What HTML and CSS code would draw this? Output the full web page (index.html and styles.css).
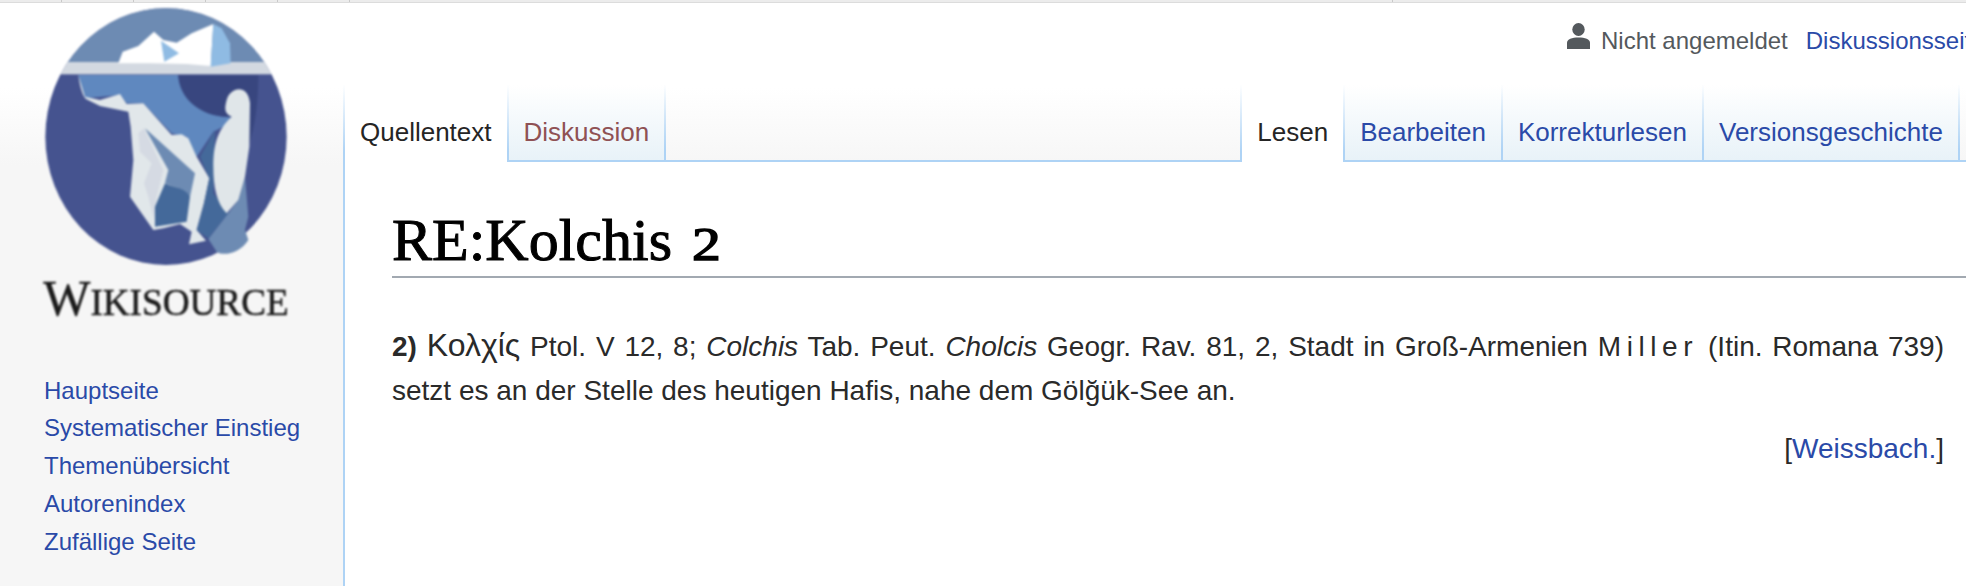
FILE: index.html
```html
<!DOCTYPE html>
<html lang="de">
<head>
<meta charset="utf-8">
<title>RE:Kolchis 2</title>
<link rel="stylesheet" href="styles.css">
</head>
<body>
<div class="strip">
  <span class="cell c1"></span><span class="cell"></span><span class="cell"></span><span class="cell"></span><span class="cell"></span><span class="cell c6"></span>
</div>
<div class="page">
  <aside class="sidebar">
    <svg class="logo" viewBox="0 9 1029 990" width="343" height="330" role="img" aria-label="Wikisource">
      <defs><clipPath id="disc"><ellipse cx="498" cy="410" rx="362" ry="385"/></clipPath></defs>
      <g clip-path="url(#disc)">
        <rect x="130" y="20" width="740" height="790" fill="#45538f"/>
        <rect x="130" y="20" width="740" height="168" fill="#6d8bb3"/>
        <rect x="130" y="186" width="740" height="37" fill="#d3d9e1"/>
      </g>
      <path fill="#fff" d="M355,190 L368,155 L415,138 L462,95 L490,120 L530,128 L575,100 L640,72 L632,198 L560,192 L450,190Z"/>
      <path fill="#8fbbe3" d="M483,122 L537,160 L493,185Z"/>
      <path fill="#8fbbe3" d="M640,72 L665,85 L690,130 L692,190 L632,200Z"/>
      <path fill="#5f88bf" d="M235,225 L535,225 C540,290 600,350 692,352 L670,380 L640,395 L590,470 L560,410 L515,400 L430,310 L380,310 L360,285 L255,295Z"/>
      <path fill="#38467f" d="M535,225 L775,225 C775,310 765,380 745,440 L695,350 C600,355 535,290 535,225Z"/>
      <path fill="#e1e7ea" d="M235,225 C240,265 250,290 258,297 L300,318 L385,335 L392,380 L400,480 L390,590 L460,690 L490,685 L540,672 L575,695 L567,733 L618,722 L590,690 L612,610 L628,535 L590,470 L565,415 L545,403 L515,405 L430,310 L380,312 L360,282 L300,300 L255,290Z"/>
      <path fill="#d5dae3" d="M432,385 L490,510 L470,590 L462,660 L445,590 L432,550 L455,490 L420,455 L415,400Z"/>
      <path fill="#6d8bb3" d="M435,385 L585,520 L570,590 C555,560 520,565 495,548 L505,510Z"/>
      <path fill="#44699a" d="M495,550 C520,565 555,560 570,590 L560,665 L465,680 L465,620Z"/>
      <path fill="#44699a" d="M645,390 L600,470 L628,535 L612,610 L590,690 L625,715 L685,640 L640,580Z"/>
      <path fill="#6d8bb3" d="M735,530 L745,650 L735,690 L745,720 C720,760 670,770 650,755 L625,717 L685,640 L715,600Z"/>
      <path fill="#e0e6e9" d="M680,300 C690,260 745,250 750,310 L748,440 L735,530 L715,600 L680,640 C650,610 640,560 640,500 C640,440 650,390 695,350 C670,340 675,320 680,300Z"/>
      <text class="wordmark" x="130" y="945" textLength="736" lengthAdjust="spacingAndGlyphs"><tspan class="wm-big">W</tspan>IKISOURCE</text>
    </svg>
    <nav class="nav">
      <a href="#">Hauptseite</a>
      <a href="#">Systematischer Einstieg</a>
      <a href="#">Themenübersicht</a>
      <a href="#">Autorenindex</a>
      <a href="#">Zufällige Seite</a>
    </nav>
  </aside>
  <main class="main">
    <div class="personal">
      <svg class="person" viewBox="0 0 23 26" width="23" height="26" aria-hidden="true">
        <ellipse cx="11.5" cy="6.5" rx="6.2" ry="6.5" fill="#54595d"/>
        <path fill="#54595d" d="M0,26 L0,20 C0,16 5,14.5 11.5,14.5 C18,14.5 23,16 23,20 L23,26Z"/>
      </svg>
      <span class="anon">Nicht angemeldet</span>
      <a class="personal-link" href="#">Diskussionsseite</a>
    </div>
    <div class="tabs">
      <div class="tabgroup">
        <a class="tab selected first" href="#">Quellentext</a>
        <a class="tab new" href="#">Diskussion</a>
      </div>
      <div class="tabgroup">
        <a class="tab selected first" href="#">Lesen</a>
        <a class="tab" href="#">Bearbeiten</a>
        <a class="tab" href="#">Korrekturlesen</a>
        <a class="tab" href="#">Versionsgeschichte</a>
      </div>
    </div>
    <article class="content">
      <h1 class="title">RE:Kolchis <span class="oldstyle">2</span></h1>
      <p class="entry"><b>2)</b> <span class="greek">Κολχίς</span> Ptol. V 12, 8; <i>Colchis</i> Tab. Peut. <i>Cholcis</i> Geogr. Rav. 81, 2, Stadt in Groß-Armenien <span class="spaced">Miller</span> (Itin. Romana 739) setzt es an der Stelle des heutigen Hafis, nahe dem Gölğük-See an.</p>
      <p class="author">[<a href="#">Weissbach.</a>]</p>
    </article>
  </main>
</div>
</body>
</html>
```
FILE: styles.css
```css
* { box-sizing: border-box; }
html, body { margin: 0; height: 586px; overflow: hidden; }
body {
  font-family: "Liberation Sans", Arial, sans-serif;
  color: #252525;
  background: #f6f6f6 linear-gradient(#fff 88px, #f6f6f6 165px) no-repeat;
}
a { color: #2a4aa8; text-decoration: none; }

.strip { display: flex; height: 3px; background: #ececec; border-bottom: 1px solid #dcdcdc; }
.cell { width: 72px; border-right: 1px solid #c9c9c9; }
.c1 { width: 62px; }
.c6 { width: 1043px; }

.page { display: flex; height: 583px; }
.sidebar { width: 343px; flex: none; }
.logo { display: block; filter: blur(0.8px); }
.wordmark { font-family: "Liberation Serif", serif; font-size: 114px; fill: #1a1a1a; stroke: #1a1a1a; stroke-width: 1.5px; }
.wm-big { font-size: 153px; }
.nav { display: flex; flex-direction: column; margin: 38.5px 0 0 44px; font-size: 24px; line-height: 37.8px; }

.main { flex: 1; min-width: 0; display: flex; flex-direction: column; }
.personal {
  height: 82px; padding: 20px 0 0 1224px;
  display: flex; align-items: flex-start; font-size: 24px; line-height: 30px; white-space: nowrap;
}
.person { flex: none; margin-right: 11px; }
.anon { color: #54595d; margin-right: 18px; margin-top: 3px; }
.personal-link { margin-top: 3px; }

.tabs {
  display: flex; justify-content: space-between; height: 77px;
  padding-right: 6px; border-bottom: 2px solid #aed3f5;
}
.tabgroup { display: flex; height: 77px; }
.tab {
  display: block; padding: 31px 15px 0; font-size: 26px; line-height: 32px;
  background: linear-gradient(#fff, #e8f2f8);
  border-style: solid; border-width: 0 2px 2px 0;
  border-image: linear-gradient(rgba(174, 211, 245, 0), #aed3f5 85%) 1;
}
.tab.first { border-left-width: 2px; }
.tab.selected { background: #fff; color: #252525; border-bottom-width: 0; }
.tab.new { color: #8f5154; }

.content {
  flex: 1; background: #fff; border-left: 2px solid #aed3f5;
  padding: 0 0 0 47px;
}
.title {
  margin: 0; height: 116px; padding-top: 42px;
  font: 400 60px/72px "Liberation Serif", serif; color: #000;
  -webkit-text-stroke: 1px #000;
  border-bottom: 2px solid #a2a9b1;
}
.oldstyle {
  display: inline-block; margin-left: 5px; font-size: 46px;
  -webkit-text-stroke: 1.4px #000;
  transform: scaleX(1.25); transform-origin: left bottom;
}
.entry {
  margin: 46px 22px 0 0; font-size: 28px; line-height: 43.7px; text-align: justify; color: #2a2a2a;
}
.greek { font-size: 32px; }
.spaced { letter-spacing: 0.2em; }
.author { margin: 15px 22px 0 0; font-size: 28px; line-height: 44px; text-align: right; color: #2a2a2a; }
```
